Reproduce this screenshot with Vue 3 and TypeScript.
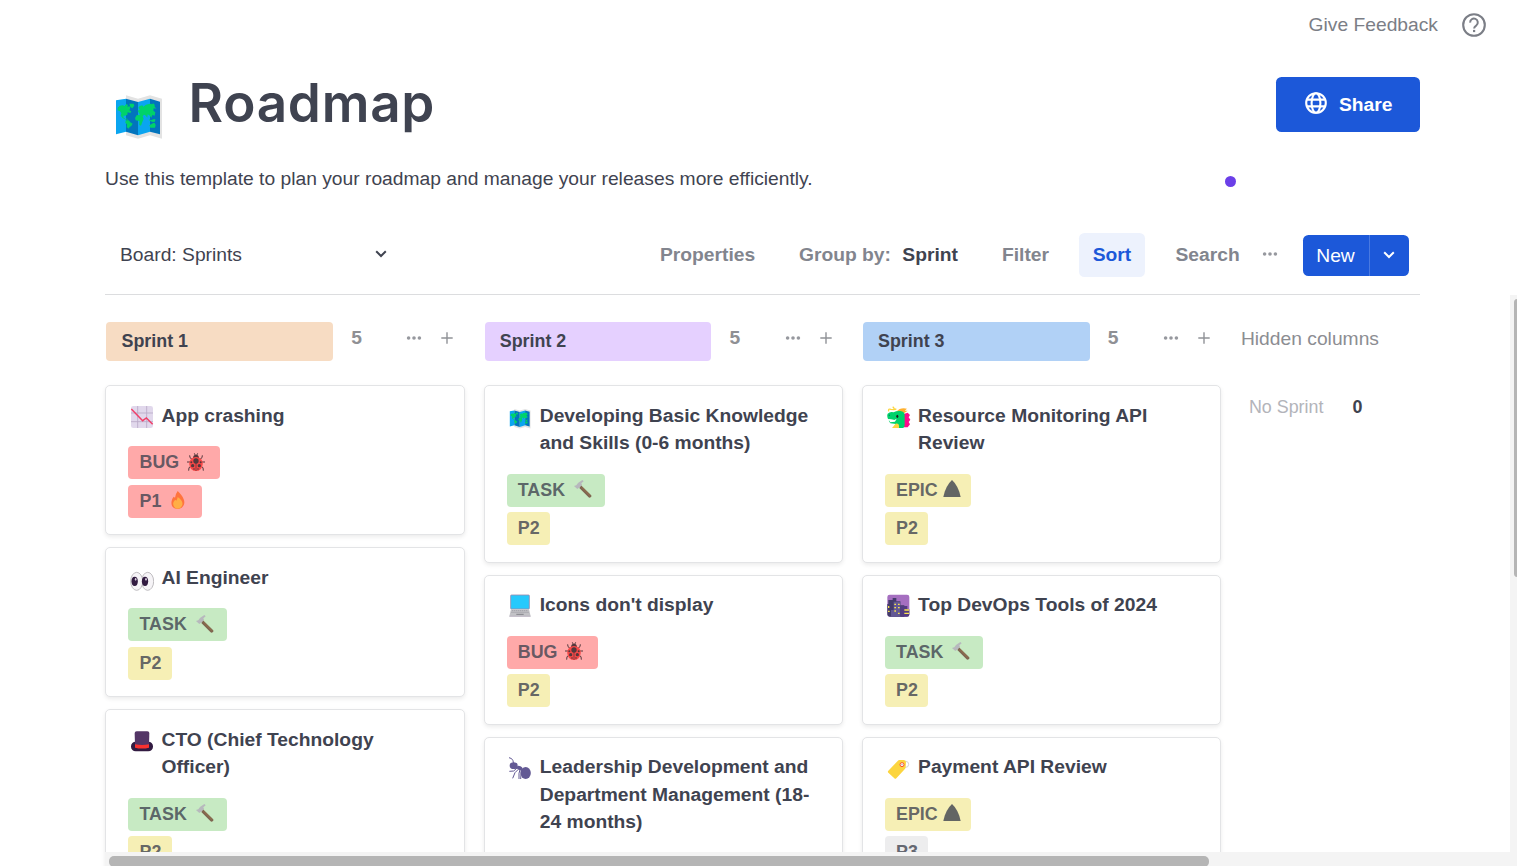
<script setup lang="ts">
interface Tag {
  label: string
  kind: string
  emoji?: string
}
interface Card {
  icon: string
  lines: string[]
  tags: Tag[]
}
interface Column {
  name: string
  tone: string
  count: number
  cards: Card[]
}

const bug: Tag = { label: 'BUG', kind: 'red', emoji: 'ladybug' }
const task: Tag = { label: 'TASK', kind: 'green', emoji: 'hammer' }
const epic: Tag = { label: 'EPIC', kind: 'yellow', emoji: 'mountain' }
const p1: Tag = { label: 'P1', kind: 'red', emoji: 'fire' }
const p2: Tag = { label: 'P2', kind: 'yellow' }
const p3: Tag = { label: 'P3', kind: 'gray' }

const columns: Column[] = [
  {
    name: 'Sprint 1', tone: 'orange', count: 5,
    cards: [
      { icon: 'chart', lines: ['App crashing'], tags: [bug, p1] },
      { icon: 'eyes', lines: ['AI Engineer'], tags: [task, p2] },
      { icon: 'hat', lines: ['CTO (Chief Technology', 'Officer)'], tags: [task, p2] },
    ],
  },
  {
    name: 'Sprint 2', tone: 'purple', count: 5,
    cards: [
      { icon: 'smallmap', lines: ['Developing Basic Knowledge', 'and Skills (0-6 months)'], tags: [task, p2] },
      { icon: 'laptop', lines: ["Icons don't display"], tags: [bug, p2] },
      { icon: 'ant', lines: ['Leadership Development and', 'Department Management (18-', '24 months)'], tags: [] },
    ],
  },
  {
    name: 'Sprint 3', tone: 'blue', count: 5,
    cards: [
      { icon: 'dragon', lines: ['Resource Monitoring API', 'Review'], tags: [epic, p2] },
      { icon: 'city', lines: ['Top DevOps Tools of 2024'], tags: [task, p2] },
      { icon: 'label', lines: ['Payment API Review'], tags: [epic, p3] },
    ],
  },
]
</script>

<template>
  <div class="page">
    <svg class="defs" width="0" height="0">
      <symbol id="map" viewBox="72 101 150 142">
        <path fill="#e3e3e3" d="M108 107 144 117 180 107 216 117V237L180 227 144 237 108 227Z" />
        <path fill="#0aa5f0" d="M78 122 108 117V216L78 224Z M144 127 180 117V216L144 227Z" />
        <path fill="#0274bd" d="M108 117 144 127V227L108 216Z M180 117 210 126V224L180 216Z" />
        <path fill="#00d26a" d="M83 144 Q88 137 98 137 L104 139 109 133 114 136 112 142 118 139 121 145 118 152 124 155 121 160 113 158 112 165 105 168 100 168 101 174 107 178 115 181 110 176 107 180 98 176 92 168 94 160 90 155 83 152Z M118 132 131 132 133 138 127 146 121 142Z M107 182 116 182 121 188 128 192 124 199 118 203 117 207 110 203 111 194 106 190Z" />
        <path fill="#00d26a" d="M143 153 150 149 145 145 149 139 157 137 160 141 168 135 180 132 187 134 189 131 194 135 194 141 199 147 191 146 190 153 196 158 194 168 187 166 184 174 178 167 173 164 172 174 166 167 162 165 158 170 161 177 157 187 153 198 148 196 148 184 137 182 135 175 140 167 150 165 147 160Z M176 178 183 182 190 179 196 178 195 186 188 187 179 183Z M178 197 185 193 190 190 194 190 197 196 195 204 181 204Z" />
      </symbol>
      <symbol id="smallmap" viewBox="0 0 72 72">
        <use href="#map" x="2.5" y="9" width="68" height="64" />
      </symbol>
      <symbol id="chart" viewBox="0 0 72 72">
        <rect x="3" y="3" width="66" height="66" rx="7" fill="#e1d8ec" />
        <path d="M23 3V69M50 3V69M3 24H69M3 50H69" stroke="#b9acc9" stroke-width="2.6" />
        <path d="M4 12 38 47 49 39 68 58" fill="none" stroke="#f0406a" stroke-width="4.5" />
      </symbol>
      <symbol id="eyes" viewBox="0 0 72 72">
        <ellipse cx="53" cy="43" rx="18" ry="27" fill="#f6f4f7" stroke="#b3b1b5" stroke-width="2.5" />
        <ellipse cx="20" cy="43" rx="18" ry="27" fill="#f6f4f7" stroke="#b3b1b5" stroke-width="2.5" />
        <ellipse cx="14" cy="43" rx="9.5" ry="14" fill="#321b41" />
        <ellipse cx="45" cy="43" rx="9.5" ry="14" fill="#321b41" />
        <ellipse cx="17" cy="37" rx="2.5" ry="4" fill="#d8d2de" />
        <ellipse cx="48" cy="37" rx="2.5" ry="4" fill="#d8d2de" />
      </symbol>
      <symbol id="hat" viewBox="0 0 72 72">
        <rect x="3" y="38" width="66" height="29" rx="14" fill="#321b41" />
        <path d="M14 12Q14 7 20 7H52Q58 7 58 12L57 50H15Z" fill="#533566" />
        <path d="M15 46Q36 50 57 46V56Q36 61 15 56Z" fill="#f8312f" />
      </symbol>
      <symbol id="laptop" viewBox="0 0 72 72">
        <rect x="8" y="3" width="56" height="42" rx="2" fill="#26c9fc" stroke="#9b89ad" stroke-width="2.5" />
        <path d="M9 46H63L68 67H4Z" fill="#c2c2c6" />
        <path d="M12 50H60M10 55H62" stroke="#9a9aa1" stroke-width="2.5" stroke-dasharray="4 2" />
        <path d="M25 61H47" stroke="#828288" stroke-width="3" />
        <path d="M4 67H68" stroke="#b4acbc" stroke-width="2.5" />
      </symbol>
      <symbol id="ant" viewBox="0 0 72 72">
        <path d="M17 26 15 14Q12 6 3 5M27 36 17 45 4 46M31 40 21 50 14 67M36 41 33 52V69M40 41 38 69" fill="none" stroke="#635994" stroke-width="3" />
        <ellipse cx="53" cy="51" rx="15.5" ry="18" fill="#635994" />
        <ellipse cx="35" cy="36" rx="9" ry="6" fill="#635994" transform="rotate(25 35 36)" />
        <ellipse cx="17" cy="29" rx="12" ry="10" fill="#635994" />
      </symbol>
      <symbol id="dragon" viewBox="0 0 72 72">
        <path d="M50 27 62 23 69 30 65 37 70 44 65 51 69 58 62 67H44Z" fill="#ff0a8b" />
        <path d="M28 20Q40 6 60 11L53 17H62L52 24Z" fill="#ffb02e" />
        <path d="M5 19Q3 10 12 13L20 14Q24 11 17 5M20 14 28 12" fill="none" stroke="#fcd53f" stroke-width="4" />
        <path d="M2 26Q9 19 20 22Q28 17 40 18Q53 19 53 31V54Q54 67 48 69H18L27 57 10 55 5 47 22 45 3 42Q-1 33 2 26Z" fill="#00d26a" />
        <path d="M6 43 22 45 29 41 24 50 9 52Z" fill="#fff" />
        <path d="M26 56Q38 54 36 69H15Z" fill="#fcd53f" />
        <ellipse cx="31" cy="34" rx="3" ry="5" fill="#1c1c1c" />
        <circle cx="7" cy="31" r="2.2" fill="#008463" />
      </symbol>
      <symbol id="city" viewBox="0 0 72 72">
        <rect x="1" y="2" width="66" height="66" rx="7" fill="#a56fc0" />
        <path d="M4 18H17V12H28V22H40V34H52V68H8Q1 68 1 61V30H4Z" fill="#433b6b" />
        <path d="M20 23H40V68H12V48H20Z" fill="#635994" />
        <path d="M41 36H61V46H67V62Q67 68 61 68H41Z" fill="#533c82" />
        <path d="M22 29H27V33H22ZM33 29H38V33H33ZM22 39H27V43H22ZM33 39H38V43H33ZM22 49H27V53H22ZM33 56H38V60H33ZM3 36H7V42H3ZM3 50H8V54H3ZM52 46H66V50H52ZM52 56H66V60H52Z" fill="#f9e34d" />
      </symbol>
      <symbol id="label" viewBox="0 0 72 72">
        <circle cx="56" cy="25" r="9" fill="none" stroke="#d3d3d3" stroke-width="3" />
        <path d="M32 15Q34 12 38 12H51Q57 13 57 19L56 34Q56 37 53 40L28 67Q25 70 22 67L4 50Q1 47 4 44Z" fill="#fcd53f" />
        <circle cx="45" cy="26" r="6" fill="#fff" stroke="#f8502f" stroke-width="3" />
        <circle cx="45" cy="26" r="2" fill="#9b9b9b" />
      </symbol>
      <symbol id="ladybug" viewBox="0 0 54 54">
        <path d="M8 7 9 14 15 19M46 7 45 14 39 19M0 27H9M54 27H45M5 53 6 44 13 39M49 53 48 44 41 39M22 1 25 7M32 1 29 7" fill="none" stroke="#2b1c22" stroke-width="3" />
        <path d="M18 14Q19 5 27 5T36 14L34 19H20Z" fill="#2b1c22" />
        <path d="M27 12C41 12 49 25 47 35Q43 54 27 54T7 35C5 25 13 12 27 12Z" fill="#f8312f" />
        <path d="M27 17V54" stroke="#2b1c22" stroke-width="2" />
        <circle cx="27" cy="24" r="8" fill="#2b1c22" />
        <circle cx="13" cy="28" r="3" fill="#2b1c22" /><circle cx="41" cy="28" r="3" fill="#2b1c22" />
        <circle cx="17" cy="38" r="5" fill="#2b1c22" /><circle cx="37" cy="38" r="5" fill="#2b1c22" />
        <circle cx="21" cy="48" r="2.5" fill="#2b1c22" /><circle cx="33" cy="48" r="2.5" fill="#2b1c22" />
      </symbol>
      <symbol id="fire" viewBox="0 0 54 54">
        <path d="M26 0C34 9 41 14 44 25C50 38 42 54 27 54C12 54 5 44 8 30Q9 22 14 17L18 20Q20 8 26 0Z" fill="#ff6723" />
        <path d="M26 18C34 23 43 33 40 42Q36 53 26 53T13 42C11 34 15 30 19 26L22 29Q25 25 26 18Z" fill="#ffb02e" />
      </symbol>
      <symbol id="hammer" viewBox="0 0 54 54">
        <path d="M21 16 51 45Q54 49 50 52T43 51L16 24Z" fill="#6d4534" />
        <path d="M24 22 48 47" stroke="#8e562e" stroke-width="3" />
        <path d="M0 18 7 16 12 9 25 0 29 4 22 10 24 15 17 22 10 27Z" fill="#b4acbc" />
      </symbol>
      <symbol id="mountain" viewBox="0 0 54 54">
        <path d="M27 0Q46 17 53 51H1Q8 17 27 0Z" fill="#3f4350" />
      </symbol>
      <symbol id="dots" viewBox="0 0 18 6">
        <circle cx="3.6" cy="3" r="1.8" /><circle cx="9" cy="3" r="1.8" /><circle cx="14.4" cy="3" r="1.8" />
      </symbol>
    </svg>

    <div class="topbar">
      <a class="feedback">Give Feedback</a>
      <svg class="help" viewBox="0 0 24 24">
        <circle cx="12" cy="12" r="10.8" fill="none" stroke="#7b7e86" stroke-width="2.1" />
        <path d="M8.2 9.7a3.8 3.8 0 1 1 6.2 2.6q-2.3 1.5-2.3 3.2" fill="none" stroke="#7b7e86" stroke-width="2" />
        <rect x="11" y="16.9" width="2.2" height="2.2" fill="#7b7e86" />
      </svg>
    </div>

    <header class="header">
      <svg class="logo"><use href="#map" /></svg>
      <h1>Roadmap</h1>
      <button class="share">
        <svg viewBox="0 0 22 22" fill="none" stroke="#fff" stroke-width="2.1">
          <circle cx="11" cy="11" r="9.8" /><ellipse cx="11" cy="11" rx="4.4" ry="9.8" />
          <path d="M2 7.6H20M2 14.4H20" />
        </svg>
        Share
      </button>
    </header>

    <p class="intro">Use this template to plan your roadmap and manage your releases more efficiently.</p>
    <span class="cursor-dot"></span>

    <nav class="controls">
      <div class="view">
        <span>Board: Sprints</span>
        <svg class="chevron" viewBox="0 0 12 8"><path d="M1.2 1.3 6 6 10.8 1.3" /></svg>
      </div>
      <span class="ctl properties">Properties</span>
      <span class="ctl group">Group by: <b>Sprint</b></span>
      <span class="ctl filter">Filter</span>
      <span class="ctl sort">Sort</span>
      <span class="ctl search">Search</span>
      <svg class="dots"><use href="#dots" /></svg>
      <div class="new">
        <span class="new-label">New</span>
        <span class="new-more"><svg class="chevron" viewBox="0 0 12 8"><path d="M1.2 1.3 6 6 10.8 1.3" /></svg></span>
      </div>
    </nav>

    <main class="board">
      <section v-for="col in columns" :key="col.name" class="column">
        <div class="col-head">
          <span class="pill" :class="col.tone">{{ col.name }}</span>
          <span class="count">{{ col.count }}</span>
          <svg class="dots"><use href="#dots" /></svg>
          <svg class="plus" viewBox="0 0 12 12"><path d="M6 .3V11.7M.3 6H11.7" /></svg>
        </div>
        <article v-for="card in col.cards" :key="card.icon" class="card">
          <div class="title">
            <svg class="icon"><use :href="'#' + card.icon" /></svg>
            <div><div v-for="line in card.lines" :key="line">{{ line }}</div></div>
          </div>
          <div class="tags">
            <span v-for="tag in card.tags" :key="tag.label" class="tag" :class="tag.kind">
              <span>{{ tag.label }}</span>
              <svg v-if="tag.emoji" :class="['emoji', tag.emoji]"><use :href="'#' + tag.emoji" /></svg>
            </span>
          </div>
        </article>
      </section>
      <aside class="hidden-cols">
        <div class="hidden-title">Hidden columns</div>
        <div class="hidden-row"><span>No Sprint</span><b>0</b></div>
      </aside>
      <div class="vtrack"><div class="vthumb"></div></div>
      <div class="htrack"><div class="hthumb"></div></div>
    </main>
  </div>
</template>

<style>
body { background: #fff; }
</style>

<style scoped>
.page {
  position: relative;
  width: 1517px;
  height: 866px;
  overflow: hidden;
  background: #fff;
  color: #3f4350;
  font-family: "Liberation Sans", Arial, sans-serif;
  font-size: 19.25px;
  white-space: nowrap;
}
.page * { box-sizing: border-box; }
.defs { position: absolute; }
.topbar {
  display: flex;
  align-items: center;
  justify-content: flex-end;
  gap: 24px;
  height: 50px;
  padding-right: 31px;
  color: #7b7e86;
}
.feedback { margin-top: -1px; }
.help { width: 24px; height: 24px; }
.header {
  display: flex;
  align-items: flex-start;
  height: 107px;
  padding: 27px 97px 0 114px;
}
.logo { width: 50px; height: 48px; margin-top: 16px; }
h1 {
  margin: -1px 0 0 24.5px;
  font: 600 53px/55px Inter, sans-serif;
  letter-spacing: 0.75px;
}
.share {
  display: flex;
  align-items: center;
  gap: 12px;
  width: 144px;
  height: 55px;
  margin-left: auto;
  padding: 0 0 0 29px;
  border: 0;
  border-radius: 5.5px;
  background: #1c58d9;
  color: #fff;
  font: bold 19.25px "Liberation Sans", Arial, sans-serif;
}
.share svg { width: 22px; height: 22px; margin-top: -3px; }
.intro { height: 44px; margin: 0 0 0 105px; line-height: 44px; }
.cursor-dot {
  position: absolute;
  left: 1225px;
  top: 176px;
  width: 11px;
  height: 11px;
  border-radius: 50%;
  background: #6b3fe8;
}
.controls {
  display: flex;
  align-items: center;
  width: 1315px;
  height: 82px;
  margin: 12px 0 0 105px;
  padding-top: 2px;
  border-bottom: 1px solid #dcdddf;
  line-height: 22px;
}
.view {
  display: flex;
  align-items: center;
  justify-content: space-between;
  width: 283px;
  margin-right: 272px;
  padding-left: 15px;
}
.view .chevron { margin-right: 1px; margin-top: -1px; }
.chevron { width: 12px; height: 8px; fill: none; stroke: #3f4350; stroke-width: 2; }
.ctl { font-weight: bold; color: #82858e; }
.properties { width: 139px; }
.group { width: 203px; }
.group b { margin-left: 6px; color: #3f4350; }
.filter { width: 77px; }
.sort {
  width: 66px;
  height: 44px;
  border-radius: 5.5px;
  background: #edf2fd;
  color: #1c58d9;
  line-height: 43px;
  text-align: center;
}
.search { margin-left: 30.5px; width: 85.5px; }
.controls .dots { margin-top: -1px; }
.dots { width: 18px; height: 6px; fill: #96989e; flex: none; }
.new {
  display: flex;
  height: 41px;
  margin: 1px 0 0 23.5px;
  border-radius: 5.5px;
  background: #1c58d9;
  color: #fff;
  line-height: 41px;
}
.new-label { width: 66px; text-align: center; }
.new-more {
  display: flex;
  align-items: center;
  justify-content: center;
  width: 40px;
  border-left: 1px solid #4979e1;
}
.new .chevron { stroke: #fff; }
.board {
  position: relative;
  display: flex;
  height: 571px;
  padding-left: 105.3px;
  overflow: hidden;
}
.column { width: 359.4px; margin-right: 18.9px; flex: none; }
.col-head { display: flex; align-items: center; height: 39px; margin: 27px 0 24px; }
.pill {
  width: 226.7px;
  height: 39px;
  margin-left: 1px;
  padding-left: 15.2px;
  border-radius: 4px;
  font-size: 17.875px;
  font-weight: bold;
  line-height: 38px;
}
.orange { background: #f7dcc3; }
.purple { background: #e5d0ff; }
.blue { background: #b1d1f6; }
.count { width: 54px; margin: -7px 0 0 18.3px; font-weight: bold; color: #8f9094; }
.col-head .dots { margin-top: -7px; }
.plus { width: 12px; height: 12px; margin: -7px 0 0 18px; fill: none; stroke: #909297; stroke-width: 1.4; }
.card {
  margin-bottom: 12px;
  padding: 15.5px 21.9px 16.6px;
  border: 1px solid #e3e4e6;
  border-radius: 5px;
  background: #fff;
  box-shadow: 0 2px 4px rgba(0, 0, 0, 0.08);
}
.title { display: flex; gap: 7.3px; font-weight: bold; line-height: 27.5px; }
.icon { width: 24px; height: 24px; margin: 3.3px 0 0 2px; flex: none; }
.tags {
  display: flex;
  flex-direction: column;
  align-items: flex-start;
  gap: 5.5px;
  min-height: 71.5px;
  margin: 17px 0 0 0.3px;
}
.tag {
  display: flex;
  align-items: flex-start;
  height: 33px;
  padding: 0 10.5px 0 11px;
  border-radius: 4px;
  color: rgba(63, 67, 80, 0.8);
  font-size: 17.875px;
  font-weight: bold;
  line-height: 32px;
}
.red { background: #ffa9a9; }
.green { background: #c7eac3; }
.yellow { background: #f6efb5; }
.gray { background: #ededee; }
.emoji { width: 18px; height: 18px; margin: 6.5px 4.5px 0 7.5px; opacity: 0.8; }
.ladybug { margin-left: 8px; }
.hammer { margin-left: 9px; margin-right: 2.5px; }
.mountain { margin: 6px 0 0 5px; }
.hidden-cols { padding: 33px 0 0 0.8px; line-height: 22px; }
.hidden-title { color: #8c8d92; }
.hidden-row { display: flex; margin: 46px 0 0 8px; font-size: 17.875px; color: #b3b4ba; }
.hidden-row b { margin-left: 29px; color: #3f4350; }
.vtrack { position: absolute; right: 0; top: 0; width: 7px; height: 557px; background: #f4f4f4; }
.vthumb { width: 7px; height: 278px; margin: 4px 0 0 4px; border-radius: 4px; background: #b5b5b5; }
.htrack { position: absolute; left: 105px; bottom: 0; width: 1412px; height: 14px; padding: 4px; background: #f4f4f4; }
.hthumb { width: 1100px; height: 11px; border-radius: 5px; background: #b5b5b5; }
</style>
